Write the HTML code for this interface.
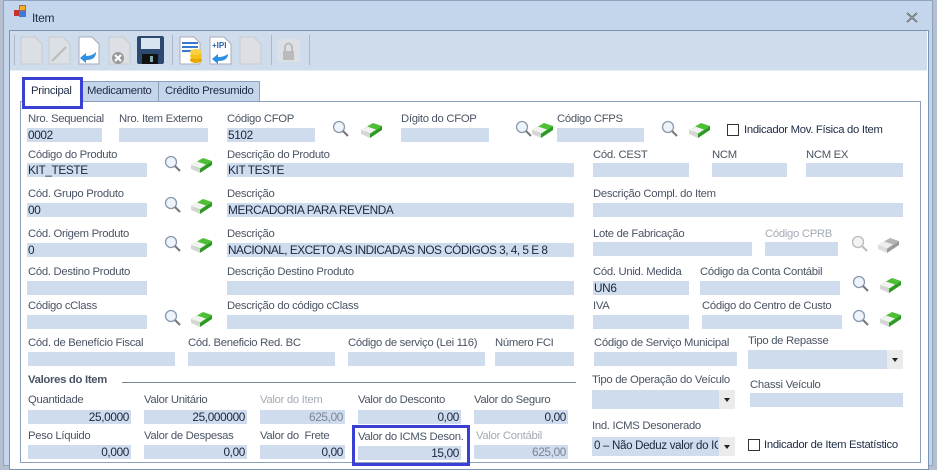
<!DOCTYPE html>
<html><head><meta charset="utf-8"><style>
*{margin:0;padding:0;box-sizing:border-box}
body{width:937px;height:466px;overflow:hidden;background:#b4c0cf;font-family:"Liberation Sans",sans-serif;font-size:11.5px;position:relative}
.a{position:absolute}
.l{position:absolute;color:#4a5464;white-space:nowrap;font-size:11.3px;letter-spacing:-0.3px}
.g{color:#a3aab5}
.f{position:absolute;background:#cfdcee;height:14px;color:#1b2540;font-size:11.8px;line-height:14px;padding-left:1px;white-space:nowrap;overflow:hidden;letter-spacing:-0.35px}
.r{text-align:right;padding-right:2px}
.dd{position:absolute;background:#cfdcee;height:19px}
.dd b{position:absolute;right:0;top:0;width:16px;height:19px;background:#ebebeb}
.dd b:after{content:"";position:absolute;left:5px;top:8px;border:3px solid transparent;border-top:4px solid #222;border-bottom:0}
.cb{position:absolute;width:12px;height:12px;border:1px solid #333;background:#fff}
</style></head><body>
<div class="a" style="left:3px;top:0;width:930px;height:466px;background:#c4d6ec;border:1px solid #8ea3bf"></div>
<div class="a" style="left:14px;top:5px;width:12px;height:12px">
<div class="a" style="left:0;top:5px;width:5px;height:6px;background:#c8302a"></div>
<div class="a" style="left:5px;top:0;width:7px;height:6px;background:#f2b01e;border:1px solid #a66"></div>
<div class="a" style="left:5px;top:6px;width:7px;height:6px;background:#3d7ad6"></div></div>
<div class="l" style="left:32px;top:11px;color:#1d2b44;font-size:12px">Item</div>
<svg class="a" style="left:906px;top:12px" width="12" height="11"><path d="M1 1l10 9M11 1l-10 9" stroke="#444" stroke-width="1.6"/><path d="M1 1l10 9M11 1l-10 9" stroke="#fff" stroke-width="0.5"/></svg>
<div class="a" style="left:9px;top:30px;width:920px;height:440px;background:#fff;border:1px solid #7d93b2"></div>
<div class="a" style="left:10px;top:31px;width:917px;height:40px;background:#cfdcec;border-bottom:1px solid #e6edf6"></div>
<div class="a" style="left:14px;top:35px;width:1px;height:30px;background:#aab8ca"></div>
<div class="a" style="left:172px;top:35px;width:1px;height:30px;background:#aab8ca"></div>
<div class="a" style="left:271px;top:35px;width:1px;height:30px;background:#aab8ca"></div>
<div class="a" style="left:309px;top:35px;width:1px;height:30px;background:#aab8ca"></div>
<svg class="a" style="left:0;top:30px" width="320" height="40">
<path d="M21 7h14l7 7v20H21z" fill="#dcdfe3" stroke="#c8ccd2"/>
<path d="M49 7h14l7 7v20H49z" fill="#dcdfe3" stroke="#c8ccd2"/><path d="M52 31l14-14" stroke="#bbb" stroke-width="2"/>
<path d="M79 7h13l7 7v20H79z" fill="#fff" stroke="#aab"/><path d="M96 22c0 6-4 8-10 8l0 3-6-5 6-5v3c4 0 7-1 10-4z" fill="#2f8fe0"/>
<path d="M109 7h14l7 7v20h-21z" fill="#dcdfe3" stroke="#c8ccd2"/><circle cx="118" cy="28" r="6" fill="#9a9a9a"/><path d="M115 25l6 6M121 25l-6 6" stroke="#fff" stroke-width="2"/>
<rect x="137" y="6" width="27" height="28" rx="2" fill="#2d4a6e"/><rect x="141" y="8" width="19" height="11" fill="#d8e4ef"/><rect x="142" y="24" width="16" height="10" fill="#111"/><rect x="150" y="26" width="3" height="6" fill="#8aa"/>
<path d="M180 7h14l6 6v21h-20z" fill="#fff" stroke="#aab"/><path d="M182 13h16M182 17h16M182 21h10" stroke="#3b78d0" stroke-width="2"/><ellipse cx="196" cy="30" rx="6" ry="3" fill="#e6a800"/><ellipse cx="196" cy="26" rx="6" ry="3" fill="#f6c21a"/><ellipse cx="196" cy="22" rx="6" ry="3" fill="#f8d040"/>
<path d="M210 7h14l7 7v20h-21z" fill="#fff" stroke="#aab"/><text x="212" y="18" font-size="8" font-weight="bold" fill="#2a5fa8" font-family="Liberation Sans">+IPI</text><path d="M228 24c0 5-4 7-10 7l0 3-6-5 6-5v3c4 0 7-1 10-3z" fill="#2f8fe0"/>
<path d="M240 7h14l7 7v20h-21z" fill="#dcdfe3" stroke="#c8ccd2"/>
<rect x="277" y="9" width="23" height="23" fill="#dcdfe3"/><rect x="283" y="21" width="11" height="9" fill="#bbb"/><path d="M285 21v-4a3.5 3.5 0 0 1 7 0v4" stroke="#bbb" stroke-width="2" fill="none"/>
</svg>
<div class="a" style="left:20px;top:101px;width:901px;height:362px;border:1px solid #8ba0bc;background:#fff"></div>
<div class="a" style="left:82px;top:81px;width:77px;height:21px;background:#c6d6ea;border:1px solid #8ba0bc"></div>
<div class="l" style="left:87px;top:85px;color:#1d2b44">Medicamento</div>
<div class="a" style="left:158px;top:81px;width:102px;height:21px;background:#c6d6ea;border:1px solid #8ba0bc"></div>
<div class="l" style="left:165px;top:85px;color:#1d2b44">Crédito Presumido</div>
<div class="a" style="left:22px;top:77px;width:61px;height:32px;border:3px solid #3b40d4;background:#fff"></div>
<div class="l" style="left:31px;top:85px;color:#1d2b44">Principal</div>

<div class="l" style="left:28px;top:113px">Nro. Sequencial</div><div class="f" style="left:27px;top:128px;width:75px">0002</div>
<div class="l" style="left:119px;top:113px">Nro. Item Externo</div><div class="f" style="left:119px;top:128px;width:89px"></div>
<div class="l" style="left:227px;top:113px">Código CFOP</div><div class="f" style="left:227px;top:128px;width:88px">5102</div>
<div class="l" style="left:401px;top:113px">Dígito do CFOP</div><div class="f" style="left:401px;top:128px;width:88px"></div>
<div class="l" style="left:557px;top:113px">Código CFPS</div><div class="f" style="left:557px;top:128px;width:87px"></div>
<div class="cb" style="left:727px;top:124px"></div><div class="l" style="left:744px;top:124px;color:#1d2b44">Indicador Mov. Física do Item</div>
<div class="l" style="left:28px;top:149px">Código do Produto</div><div class="f" style="left:27px;top:163px;width:120px">KIT_TESTE</div>
<div class="l" style="left:227px;top:149px">Descrição do Produto</div><div class="f" style="left:227px;top:163px;width:347px">KIT TESTE</div>
<div class="l" style="left:593px;top:149px">Cód. CEST</div><div class="f" style="left:593px;top:163px;width:96px"></div>
<div class="l" style="left:712px;top:149px">NCM</div><div class="f" style="left:712px;top:163px;width:75px"></div>
<div class="l" style="left:806px;top:149px">NCM EX</div><div class="f" style="left:806px;top:163px;width:97px"></div>
<div class="l" style="left:28px;top:188px">Cód. Grupo Produto</div><div class="f" style="left:27px;top:203px;width:120px">00</div>
<div class="l" style="left:227px;top:188px">Descrição</div><div class="f" style="left:227px;top:203px;width:347px">MERCADORIA PARA REVENDA</div>
<div class="l" style="left:593px;top:188px">Descrição Compl. do Item</div><div class="f" style="left:593px;top:203px;width:310px"></div>
<div class="l" style="left:28px;top:228px">Cód. Origem Produto</div><div class="f" style="left:27px;top:243px;width:120px">0</div>
<div class="l" style="left:227px;top:228px">Descrição</div><div class="f" style="left:227px;top:243px;width:347px;letter-spacing:-0.5px">NACIONAL, EXCETO AS INDICADAS NOS CÓDIGOS 3, 4, 5 E 8</div>
<div class="l" style="left:593px;top:228px">Lote de Fabricação</div><div class="f" style="left:593px;top:242px;width:159px"></div>
<div class="l g" style="left:765px;top:228px">Código CPRB</div><div class="f" style="left:765px;top:242px;width:73px"></div>
<div class="l" style="left:28px;top:266px">Cód. Destino Produto</div><div class="f" style="left:27px;top:281px;width:120px"></div>
<div class="l" style="left:227px;top:266px">Descrição Destino Produto</div><div class="f" style="left:227px;top:281px;width:347px"></div>
<div class="l" style="left:593px;top:266px">Cód. Unid. Medida</div><div class="f" style="left:593px;top:281px;width:96px">UN6</div>
<div class="l" style="left:700px;top:266px">Código da Conta Contábil</div><div class="f" style="left:700px;top:281px;width:140px"></div>
<div class="l" style="left:28px;top:300px">Código cClass</div><div class="f" style="left:27px;top:315px;width:120px"></div>
<div class="l" style="left:227px;top:300px">Descrição do código cClass</div><div class="f" style="left:227px;top:315px;width:347px"></div>
<div class="l" style="left:593px;top:300px">IVA</div><div class="f" style="left:593px;top:315px;width:96px"></div>
<div class="l" style="left:702px;top:300px">Código do Centro de Custo</div><div class="f" style="left:702px;top:315px;width:140px"></div>
<div class="l" style="left:28px;top:337px">Cód. de Benefício Fiscal</div><div class="f" style="left:28px;top:352px;width:147px"></div>
<div class="l" style="left:188px;top:337px">Cód. Beneficio Red. BC</div><div class="f" style="left:188px;top:352px;width:147px"></div>
<div class="l" style="left:348px;top:337px">Código de serviço (Lei 116)</div><div class="f" style="left:348px;top:352px;width:137px"></div>
<div class="l" style="left:495px;top:337px">Número FCI</div><div class="f" style="left:495px;top:352px;width:79px"></div>
<div class="l" style="left:594px;top:337px">Código de Serviço Municipal</div><div class="f" style="left:594px;top:352px;width:143px"></div>
<div class="l" style="left:748px;top:335px">Tipo de Repasse</div><div class="dd" style="left:748px;top:350px;width:155px"><b></b></div>
<div class="l" style="left:28px;top:374px;font-weight:bold;color:#4a5464">Valores do Item</div>
<div class="a" style="left:122px;top:382px;width:454px;height:1px;background:#7b8494"></div>
<div class="l" style="left:28px;top:394px">Quantidade</div><div class="f r" style="left:28px;top:410px;width:103px">25,0000</div>
<div class="l" style="left:144px;top:394px">Valor Unitário</div><div class="f r" style="left:144px;top:410px;width:103px">25,000000</div>
<div class="l g" style="left:260px;top:394px">Valor do Item</div><div class="f r" style="left:260px;top:410px;width:85px;color:#7b8494">625,00</div>
<div class="l" style="left:358px;top:394px">Valor do Desconto</div><div class="f r" style="left:358px;top:410px;width:103px">0,00</div>
<div class="l" style="left:474px;top:394px">Valor do Seguro</div><div class="f r" style="left:474px;top:410px;width:94px">0,00</div>
<div class="l" style="left:28px;top:430px">Peso Líquido</div><div class="f r" style="left:28px;top:445px;width:103px">0,000</div>
<div class="l" style="left:144px;top:430px">Valor de Despesas</div><div class="f r" style="left:144px;top:445px;width:103px">0,00</div>
<div class="l" style="left:260px;top:430px">Valor do &nbsp;Frete</div><div class="f r" style="left:260px;top:445px;width:85px">0,00</div>
<div class="l" style="left:358px;top:431px">Valor do ICMS Deson.</div><div class="f r" style="left:358px;top:446px;width:103px">15,00</div>
<div class="a" style="left:352px;top:425px;width:118px;height:41px;border:3px solid #3b40d4"></div>
<div class="l g" style="left:476px;top:430px">Valor Contábil</div><div class="f r" style="left:474px;top:445px;width:94px;color:#7b8494">625,00</div>
<div class="l" style="left:592px;top:374px">Tipo de Operação do Veículo</div><div class="dd" style="left:592px;top:390px;width:143px"><b></b></div>
<div class="l" style="left:750px;top:379px">Chassi Veículo</div><div class="f" style="left:750px;top:393px;width:153px"></div>
<div class="l" style="left:592px;top:420px">Ind. ICMS Desonerado</div><div class="dd" style="left:592px;top:437px;width:143px"><span style="position:absolute;left:2px;top:3px;font-size:11.5px;color:#1b2540;white-space:nowrap;width:124px;overflow:hidden;letter-spacing:-0.3px">0 – Não Deduz valor do IC</span><b></b></div>
<div class="cb" style="left:748px;top:439px"></div><div class="l" style="left:764px;top:439px;color:#1d2b44">Indicador de Item Estatístico</div>

<svg class="a" style="left:0;top:0" width="937" height="466">
<defs>
<g id="m"><circle cx="7" cy="6" r="5.5" fill="#eef4fb" stroke="#8a9aab" stroke-width="1.3"/><path d="M11 10l5 5" stroke="#777" stroke-width="2"/></g>
<g id="e"><path d="M1 10l12-7 9 3-12 8z" fill="#4dbf35"/><path d="M1 10l6-3.5 9 3-6 4z" fill="#f2f2f2"/><path d="M1 10l9 4v4l-9-4z" fill="#d6d6d6"/><path d="M10 14l12-8v4l-12 8z" fill="#2c9a22"/></g>
<g id="eg"><path d="M1 10l12-7 9 3-12 8z" fill="#b5b5b5"/><path d="M1 10l6-3.5 9 3-6 4z" fill="#eee"/><path d="M1 10l9 4v4l-9-4z" fill="#ddd"/><path d="M10 14l12-8v4l-12 8z" fill="#999"/></g>
<g id="mg"><circle cx="7" cy="6" r="5.5" fill="#f3f3f3" stroke="#bbb" stroke-width="1.3"/><path d="M11 10l5 5" stroke="#bbb" stroke-width="2"/></g>
</defs>
<use href="#m" x="332" y="121"/><use href="#e" x="360" y="120"/>
<use href="#m" x="515" y="121"/><use href="#e" x="531" y="120"/>
<use href="#m" x="661" y="121"/><use href="#e" x="688" y="120"/>
<use href="#m" x="164" y="156"/><use href="#e" x="190" y="155"/>
<use href="#m" x="164" y="197"/><use href="#e" x="190" y="196"/>
<use href="#m" x="164" y="236"/><use href="#e" x="190" y="235"/>
<use href="#mg" x="851" y="236"/><use href="#eg" x="877" y="235"/>
<use href="#m" x="852" y="276"/><use href="#e" x="879" y="275"/>
<use href="#m" x="164" y="310"/><use href="#e" x="190" y="309"/>
<use href="#m" x="852" y="310"/><use href="#e" x="879" y="309"/>
</svg>
</body></html>
